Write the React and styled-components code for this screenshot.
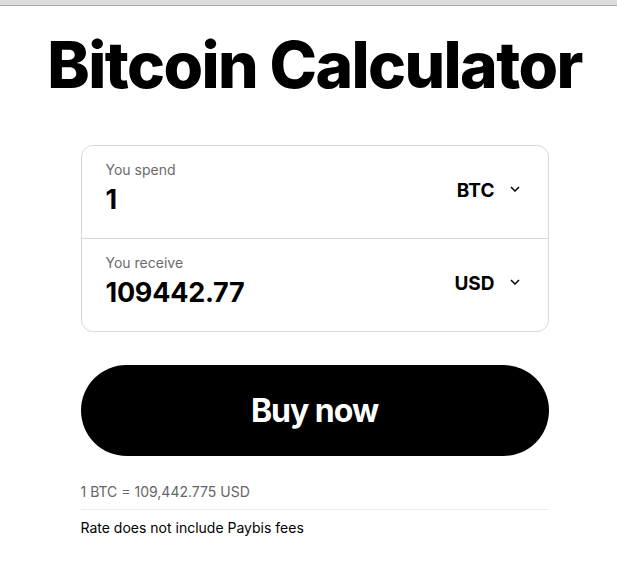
import React from "react";
import styled, { createGlobalStyle } from "styled-components";

const Global = createGlobalStyle`
  * { box-sizing: border-box; }
  body { margin: 0; background: #fff; font-family: Inter, "Noto Sans", sans-serif; color: #000; }
`;

const TopBar = styled.div`
  height: 6px;
  background: #dcdde1;
  border-bottom: 1px solid #a9aaad;
`;

const Page = styled.main`
  display: flex;
  flex-direction: column;
  align-items: center;
  padding-left: 12px;
`;

const Title = styled.h1`
  margin: 20px 0 0;
  font-size: 64px;
  font-weight: 800;
  letter-spacing: -1.6px;
  line-height: normal;
`;

const Content = styled.div`
  width: 468px;
  margin-top: 42px;
  display: flex;
  flex-direction: column;
`;

const Card = styled.div`
  border: 1px solid #d9d9d9;
  border-radius: 12px;
  display: flex;
  flex-direction: column;
`;

const Row = styled.div`
  height: ${(p) => (p.$divider ? 93 : 92)}px;
  display: flex;
  align-items: flex-start;
  justify-content: space-between;
  padding: 0 28px 0 24px;
  border-top: ${(p) => (p.$divider ? "1px solid #d9d9d9" : "none")};
`;

const Field = styled.div`
  display: flex;
  flex-direction: column;
  gap: 5px;
  padding-top: 15px;
`;

const Label = styled.span`
  font-size: 14px;
  color: #6b6b6b;
  line-height: 17px;
`;

const Value = styled.span`
  font-size: 27px;
  font-weight: 700;
  letter-spacing: -0.25px;
  line-height: 33px;
`;

const Currency = styled.button`
  align-self: center;
  display: flex;
  align-items: center;
  gap: 15px;
  border: none;
  background: none;
  padding: 0;
  font-family: inherit;
  font-size: 19px;
  font-weight: 700;
  color: #000;
  margin-top: -3px;
`;

const ChevronIcon = styled.svg`
  margin-top: -3px;
`;

const Chevron = () => (
  <ChevronIcon width="10" height="6" viewBox="0 0 10 6" fill="none">
    <path d="M1 1L5 5L9 1" stroke="#000" strokeWidth="1.5" />
  </ChevronIcon>
);

const BuyButton = styled.button`
  margin-top: 33px;
  height: 91px;
  border: none;
  border-radius: 46px;
  background: #000;
  color: #fff;
  font-family: inherit;
  font-size: 32px;
  font-weight: 700;
  letter-spacing: -1px;
`;

const Rate = styled.div`
  margin-top: 27px;
  font-size: 14px;
  color: #666;
  padding-bottom: 9px;
  border-bottom: 1px solid #ececec;
`;

const Note = styled.div`
  margin-top: 9px;
  font-size: 14px;
  color: #000;
`;

export default function App() {
  return (
    <>
      <Global />
      <TopBar />
      <Page>
        <Title>Bitcoin Calculator</Title>
        <Content>
          <Card>
            <Row>
              <Field>
                <Label>You spend</Label>
                <Value>1</Value>
              </Field>
              <Currency>
                BTC <Chevron />
              </Currency>
            </Row>
            <Row $divider>
              <Field>
                <Label>You receive</Label>
                <Value>109442.77</Value>
              </Field>
              <Currency>
                USD <Chevron />
              </Currency>
            </Row>
          </Card>
          <BuyButton>Buy now</BuyButton>
          <Rate>1 BTC = 109,442.775 USD</Rate>
          <Note>Rate does not include Paybis fees</Note>
        </Content>
      </Page>
    </>
  );
}
